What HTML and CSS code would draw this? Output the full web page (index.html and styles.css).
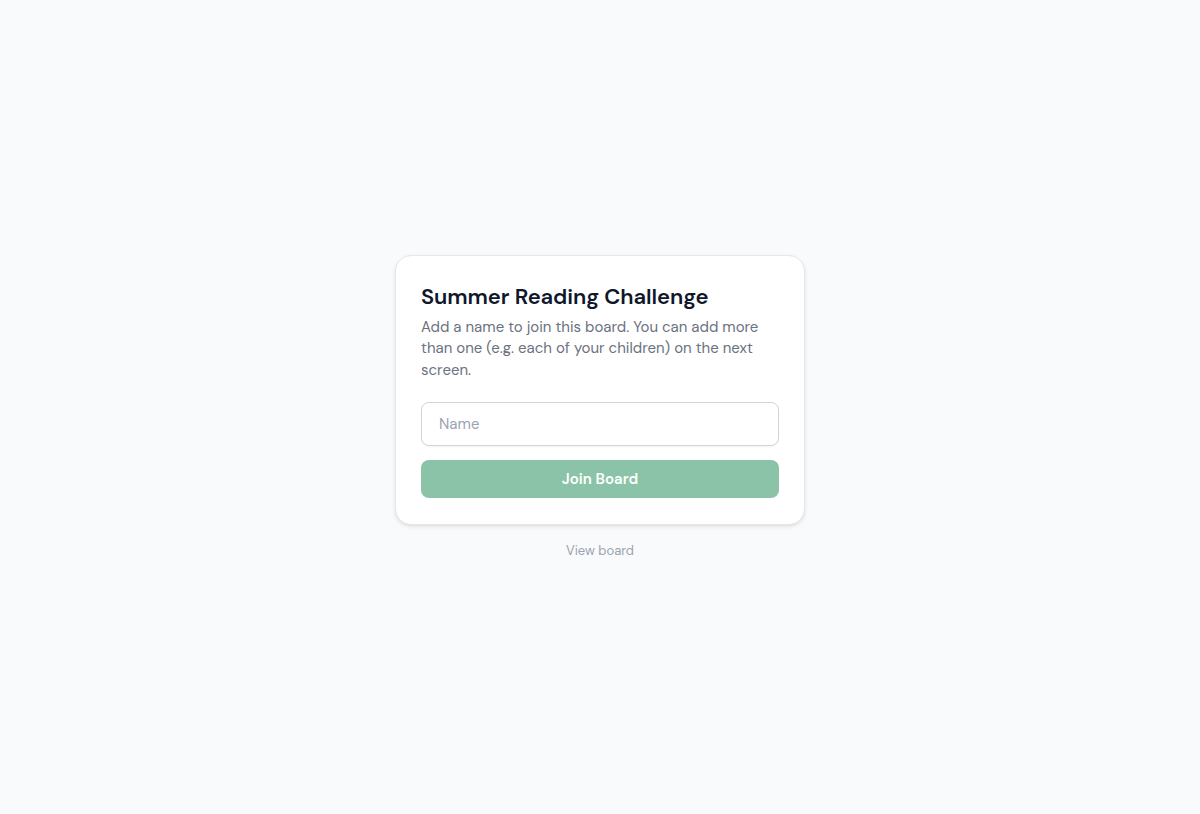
FILE: index.html
```html
<!DOCTYPE html>
<html lang="en">
<head>
<meta charset="utf-8">
<title>Summer Reading Challenge</title>
<link rel="stylesheet" href="styles.css">
</head>
<body>
<main class="page">
  <div class="wrap">
    <section class="card">
      <h1 class="title">Summer Reading Challenge</h1>
      <p class="desc">Add a name to join this board. You can add more than one (e.g. each of your children) on the next screen.</p>
      <form class="form">
        <input class="input" type="text" placeholder="Name">
        <button class="btn" type="button">Join Board</button>
      </form>
    </section>
    <a class="link" href="#">View board</a>
  </div>
</main>
</body>
</html>
```
FILE: styles.css
```css
* { box-sizing: border-box; }
html, body { margin: 0; height: 100%; }
body {
  background: #f9fafb;
  font-family: "DM Sans", Inter, "Noto Sans", sans-serif;
  color: #111827;
}
.page {
  min-height: 100vh;
  display: flex;
  align-items: center;
  justify-content: center;
}
.wrap {
  width: 410px;
  display: flex;
  flex-direction: column;
  align-items: stretch;
  gap: 17px;
}
.card {
  background: #fff;
  border: 1px solid #e5e7eb;
  border-radius: 16px;
  box-shadow: 0 2px 4px rgba(0,0,0,0.08), 0 1px 2px rgba(0,0,0,0.04);
  padding: 26px 25px 26px;
}
.title {
  margin: 0;
  font-size: 22px;
  font-weight: 600;
  line-height: 30px;
  color: #0f172a;
  letter-spacing: -0.08px;
}
.desc {
  margin: 5px 0 0;
  font-size: 15px;
  line-height: 21.5px;
  color: #6b7280;
}
.form {
  margin-top: 21px;
  display: flex;
  flex-direction: column;
  gap: 14px;
}
.input {
  height: 44px;
  border: 1px solid #d1d5db;
  border-radius: 8px;
  padding: 0 17px;
  font: inherit;
  font-size: 15px;
  color: #111827;
  background: #fff;
  box-shadow: 0 1px 2px rgba(0,0,0,0.05);
}
.input::placeholder { color: #9ca3af; }
.btn {
  height: 38px;
  border: 0;
  border-radius: 8px;
  background: #8bc3a9;
  color: #fff;
  font: inherit;
  font-size: 15px;
  font-weight: 600;
}
.link {
  align-self: center;
  font-size: 13px;
  color: #9ca3af;
  text-decoration: none;
}
```
